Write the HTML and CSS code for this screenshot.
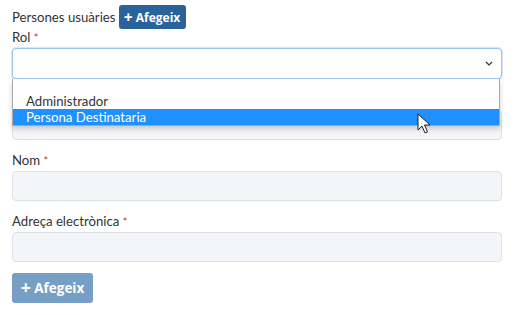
FILE: index.html
```html
<!DOCTYPE html>
<html lang="ca">
<head>
  <meta charset="UTF-8" />
  <title>Persones usuàries</title>
  <link rel="stylesheet" href="styles.css">
</head>
<body>
  <div class="form">
    <div class="header">
      <span class="title">Persones usuàries</span>
      <button type="button" class="btn btn-add"><span class="plus">+</span> Afegeix</button>
    </div>

    <div class="field">
      <label>Rol <span class="req">*</span></label>
      <div class="select-wrap">
        <div class="select">
          <svg class="chevron" width="8" height="5" viewBox="0 0 8 5"><path d="M1 1l3 3 3-3" fill="none" stroke="#333" stroke-width="1.2"/></svg>
        </div>
        <ul class="dropdown">
          <li class="option blank"></li>
          <li class="option">Administrador</li>
          <li class="option selected">Persona Destinataria</li>
        </ul>
        <svg class="cursor" width="14" height="21" viewBox="0 0 14 21"><path d="M1 1v16l4-4 3 7 2.5-1-3-7h5.5z" fill="#fff" stroke="#222" stroke-width="1" stroke-linejoin="round"/></svg>
      </div>
    </div>

    <div class="field">
      <label></label>
      <div class="input"></div>
    </div>

    <div class="field">
      <label>Nom <span class="req">*</span></label>
      <div class="input"></div>
    </div>

    <div class="field">
      <label>Adreça electrònica <span class="req">*</span></label>
      <div class="input"></div>
    </div>

    <div class="actions">
      <button type="button" class="btn btn-submit" disabled><span class="plus">+</span> Afegeix</button>
    </div>
  </div>
</body>
</html>
```

FILE: styles.css
```css
body {
  margin: 0;
  padding: 5px 15px 0 12px;
  font-family: Lato, 'Open Sans', sans-serif;
  font-size: 13.2px;
  color: #333;
  background: #fff;
}
.form {
  display: flex;
  flex-direction: column;
  gap: 12px;
}
.header {
  display: flex;
  align-items: center;
  gap: 3px;
  height: 24px;
  margin-bottom: -12px;
}
.btn {
  border: none;
  border-radius: 3px;
  color: #fff;
  font-family: 'Open Sans', sans-serif;
  font-weight: 700;
  font-size: 12px;
  cursor: pointer;
  padding: 0;
}
.plus {
  font-size: 1.3em;
  line-height: 1;
  vertical-align: -1px;
}
.btn-add {
  background: #2a629c;
  height: 24px;
  width: 67px;
}
.btn-submit {
  background: #769fc6;
  height: 30px;
  width: 81px;
  font-size: 13.5px;
  cursor: default;
}
.actions {
  margin-top: -1px;
}
.field {
  display: flex;
  flex-direction: column;
}
.field label {
  height: 17px;
  line-height: 17px;
  margin-bottom: 2px;
}
.req {
  color: #c0392b;
  font-size: 11px;
}
.input {
  height: 28px;
  background: #f4f5f9;
  border: 1px solid #dde1e8;
  border-radius: 4px;
}
.select-wrap {
  position: relative;
}
.select {
  height: 29px;
  border: 1px solid #9cc4f2;
  border-radius: 4px;
  box-shadow: 0 0 0 1px #d6e7fb;
  background: #fff;
  display: flex;
  align-items: center;
  justify-content: flex-end;
  padding-right: 8px;
}
.dropdown {
  position: absolute;
  top: 31px;
  left: 0;
  right: 2px;
  margin: 0;
  padding: 0;
  list-style: none;
  background: #fff;
  border: 1px solid #a9a9a9;
  border-top: none;
  box-shadow: 0 3px 5px rgba(0, 0, 0, 0.18);
  z-index: 2;
}
.option {
  height: 16px;
  line-height: 16px;
  padding-left: 13px;
  color: #333;
}
.option.blank {
  height: 14px;
}
.option.selected {
  background: #1e90ff;
  color: #fff;
}
.cursor {
  position: absolute;
  left: 405px;
  top: 65px;
  z-index: 3;
}
```
